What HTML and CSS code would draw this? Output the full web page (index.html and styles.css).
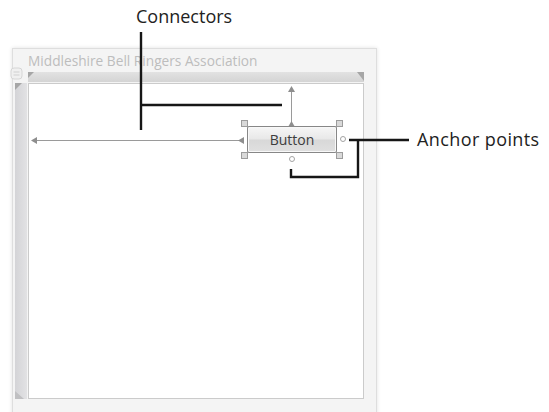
FILE: index.html
```html
<!DOCTYPE html>
<html lang="en">

<head>
  <meta charset="UTF-8">
  <meta name="viewport" content="width=device-width, initial-scale=1.0">
  <title>Connectors and anchor points</title>
  <link rel="stylesheet" href="styles.css">
</head>

<body>
  <div class="stage">
    <div class="window">
      <svg class="move-icon" width="13" height="13" viewBox="0 0 13 13">
        <rect x="1" y="1" width="11" height="11" rx="3" fill="#f0f0f0" stroke="#d6d6d6" />
        <path d="M3.5 5H9.5M3.5 8H9.5" stroke="#cfcfcf" stroke-width="1.2" />
      </svg>
      <div class="title">Middleshire Bell Ringers Association</div>
      <div class="designer">
        <div class="corner"></div>
        <div class="ruler ruler-top"></div>
        <div class="ruler ruler-left"></div>
        <div class="canvas">
          <!-- connectors drawn by the designer -->
          <svg class="connectors" width="334" height="314">
            <g stroke="#9a9a9a" stroke-width="1" fill="none">
              <path d="M262.5 6V38" />
              <path d="M6 56.5H210" />
            </g>
            <g fill="#8e8e8e">
              <polygon points="262.5,2 259,8 266,8" />
              <polygon points="262.5,37 259,43 266,43" />
              <polygon points="2,56.5 8,53 8,60" />
              <polygon points="209,56.5 215,53 215,60" />
            </g>
          </svg>
          <div class="control">
            <div class="btn">Button</div>
            <span class="handle tl"></span>
            <span class="handle tr"></span>
            <span class="handle bl"></span>
            <span class="handle br"></span>
            <span class="anchor right"></span>
            <span class="anchor bottom"></span>
          </div>
        </div>
      </div>
    </div>

    <!-- callouts -->
    <div class="label label-connectors">Connectors</div>
    <div class="label label-anchors">Anchor points</div>
    <svg class="callouts" width="549" height="412">
      <g stroke="#161616" stroke-width="2.4" fill="none">
        <path d="M141 32V130" />
        <path d="M141 105H282" />
        <path d="M349 140H409" />
        <path d="M358 140V177H291V169" />
      </g>
    </svg>
  </div>
</body>

</html>
```

FILE: styles.css
```css
body {
  margin: 0;
  background: #fff;
  font-family: "Open Sans", "Liberation Sans", sans-serif;
}

.stage {
  position: relative;
  width: 549px;
  height: 412px;
  overflow: hidden;
  padding: 48px 0 0 12px;
  box-sizing: border-box;
}

.window {
  position: relative;
  width: 365px;
  height: 380px;
  box-sizing: border-box;
  padding: 0 12px 0 2px;
  background: #f4f4f4;
  border: 1px solid #dedede;
  box-shadow: 0 0 4px rgba(0, 0, 0, 0.12);
}

.move-icon {
  position: absolute;
  left: -3px;
  top: 18px;
}

.title {
  height: 23px;
  padding: 1px 0 0 13px;
  box-sizing: border-box;
  font-size: 13.7px;
  line-height: 21px;
  color: #bdbdbd;
  white-space: nowrap;
}

.designer {
  display: grid;
  grid-template-columns: 12px 1fr;
  grid-template-rows: 10px 316px;
  column-gap: 1px;
  row-gap: 1px;
}

.ruler {
  position: relative;
}

.ruler::before,
.ruler::after {
  content: "";
  position: absolute;
  background: #a6a6a6;
}

.ruler-top {
  background: linear-gradient(#e2e2e2, #d4d4d4);
}

.ruler-top::before {
  left: 0;
  top: 0;
  width: 6px;
  height: 6px;
  clip-path: polygon(0 0, 100% 0, 0 100%);
}

.ruler-top::after {
  right: 0;
  top: 0;
  width: 7px;
  height: 9px;
  clip-path: polygon(0 0, 100% 0, 100% 100%);
}

.ruler-left {
  background: linear-gradient(to right, #d4d4d7, #e2e2e4);
}

.ruler-left::before {
  left: 0;
  top: 0;
  width: 7px;
  height: 7px;
  clip-path: polygon(0 0, 100% 0, 0 100%);
}

.ruler-left::after {
  left: 0;
  bottom: 0;
  width: 9px;
  height: 8px;
  background: #c0c0c2;
  clip-path: polygon(0 0, 100% 100%, 0 100%);
}

.canvas {
  position: relative;
  background: #fff;
  border: 1px solid #cbcbcb;
}

.connectors {
  position: absolute;
  left: 0;
  top: 0;
}

.control {
  position: absolute;
  left: 218px;
  top: 42px;
  width: 90px;
  height: 27px;
}

.btn {
  width: 100%;
  height: 100%;
  box-sizing: border-box;
  border: 1px solid #878787;
  border-radius: 2px;
  background: linear-gradient(#f6f6f6 0%, #e8e8e8 48%, #d8d8d8 52%, #e0e0e0 100%);
  box-shadow: inset 0 0 0 1px #f8f8f8;
  font-size: 14px;
  line-height: 25px;
  text-align: center;
  color: #3d3d3d;
}

.handle {
  position: absolute;
  width: 5px;
  height: 5px;
  background: #d9d9d9;
  border: 1px solid #9c9c9c;
}

.tl { left: -6px; top: -6px; }
.tr { right: -6px; top: -6px; }
.bl { left: -6px; bottom: -6px; }
.br { right: -6px; bottom: -6px; }

.anchor {
  position: absolute;
  width: 4px;
  height: 4px;
  border: 1px solid #a4a4a4;
  border-radius: 50%;
  background: #fff;
}

.anchor.right {
  left: 93px;
  top: 10px;
}

.anchor.bottom {
  left: 42px;
  top: 30px;
}

.label {
  position: absolute;
  font-size: 18px;
  line-height: 18px;
  color: #222;
  white-space: nowrap;
}

.label-connectors {
  left: 136px;
  top: 7px;
}

.label-anchors {
  left: 417px;
  top: 130px;
  letter-spacing: 0.4px;
}

.callouts {
  position: absolute;
  left: 0;
  top: 0;
  pointer-events: none;
}
```
